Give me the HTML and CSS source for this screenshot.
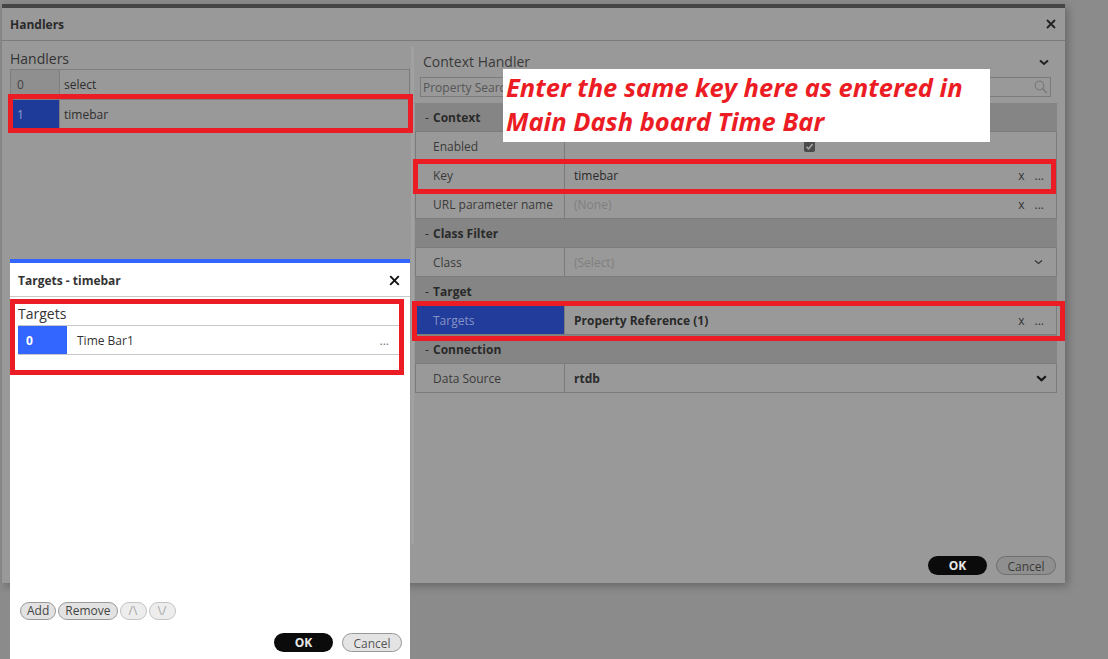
FILE: index.html
```html
<!DOCTYPE html>
<html>
<head>
    <title>Handlers</title>
    <link rel="stylesheet" href="styles.css">
</head>
<body>
    <div class="dialog">
        <div class="dialog-head">
            <span>Handlers</span>
            <svg class="close" width="10" height="10" viewBox="0 0 10 10"><path d="M1 1L9 9M9 1L1 9" stroke="#222" stroke-width="1.8" fill="none"/></svg>
        </div>
        <div class="dialog-body">
            <div class="left-pane">
                <div class="pane-title">Handlers</div>
                <div class="list">
                    <div class="list-row">
                        <div class="idx">0</div>
                        <div class="name">select</div>
                    </div>
                    <div class="list-row selected">
                        <div class="idx">1</div>
                        <div class="name">timebar</div>
                    </div>
                </div>
            </div>
            <div class="splitter"><div class="splitter-bar"></div></div>
            <div class="right-pane">
                <div class="ctx-title">
                    <span>Context Handler</span>
                    <svg width="10" height="7" viewBox="0 0 10 7"><path d="M1 1.5L5 5L9 1.5" stroke="#222" stroke-width="2" fill="none"/></svg>
                </div>
                <div class="search">
                    <span>Property Search</span>
                    <svg width="14" height="14" viewBox="0 0 14 14"><circle cx="5.5" cy="5.5" r="4.3" stroke="#7b7b7b" stroke-width="1.3" fill="none"/><path d="M8.6 8.6L13 13" stroke="#7b7b7b" stroke-width="1.6"/></svg>
                </div>
                <div class="grid">
                    <div class="cat first"><span class="dash">-</span>Context</div>
                    <div class="prop">
                        <div class="prop-label">Enabled</div>
                        <div class="prop-value center">
                            <span class="check"><svg width="11" height="11" viewBox="0 0 11 11"><path d="M2.5 5.8L4.6 7.8L8.6 3" stroke="#a3a3a3" stroke-width="1.6" fill="none"/></svg></span>
                        </div>
                    </div>
                    <div class="prop">
                        <div class="prop-label">Key</div>
                        <div class="prop-value"><span>timebar</span><span class="tools"><span>x</span><span>...</span></span></div>
                    </div>
                    <div class="prop">
                        <div class="prop-label">URL parameter name</div>
                        <div class="prop-value"><span class="muted">(None)</span><span class="tools"><span>x</span><span>...</span></span></div>
                    </div>
                    <div class="cat"><span class="dash">-</span>Class Filter</div>
                    <div class="prop">
                        <div class="prop-label">Class</div>
                        <div class="prop-value"><span class="muted">(Select)</span>
                            <svg class="caret" width="9" height="6" viewBox="0 0 9 6"><path d="M1 1.5L4.5 4.5L8 1.5" stroke="#333" stroke-width="1.2" fill="none"/></svg>
                        </div>
                    </div>
                    <div class="cat"><span class="dash">-</span>Target</div>
                    <div class="prop">
                        <div class="prop-label active">Targets</div>
                        <div class="prop-value"><b>Property Reference (1)</b><span class="tools"><span>x</span><span>...</span></span></div>
                    </div>
                    <div class="cat"><span class="dash">-</span>Connection</div>
                    <div class="prop last">
                        <div class="prop-label">Data Source</div>
                        <div class="prop-value"><b>rtdb</b>
                            <svg class="caret bold" width="11" height="7" viewBox="0 0 11 7"><path d="M1.2 1.2L5.5 5.2L9.8 1.2" stroke="#151515" stroke-width="2.2" fill="none"/></svg>
                        </div>
                    </div>
                </div>
                <div class="actions">
                    <button class="btn-ok">OK</button>
                    <button class="btn-cancel dim">Cancel</button>
                </div>
            </div>
        </div>
    </div>

    <div class="targets">
        <div class="targets-head">
            <span>Targets - timebar</span>
            <svg width="11" height="11" viewBox="0 0 11 11"><path d="M1.2 1.2L9.8 9.8M9.8 1.2L1.2 9.8" stroke="#111" stroke-width="1.9" fill="none"/></svg>
        </div>
        <div class="targets-body">
            <div class="pane-title">Targets</div>
            <div class="target-row">
                <div class="idx">0</div>
                <div class="name">Time Bar1</div>
                <div class="more">...</div>
            </div>
        </div>
        <div class="tool-row">
            <button class="pill">Add</button>
            <button class="pill">Remove</button>
            <button class="pill off">/\</button>
            <button class="pill off">\/</button>
        </div>
        <div class="actions light">
            <button class="btn-ok">OK</button>
            <button class="btn-cancel">Cancel</button>
        </div>
    </div>

    <div class="mark mark-handler"></div>
    <div class="mark mark-key"></div>
    <div class="mark mark-targets"></div>
    <div class="mark mark-list"></div>

    <div class="note">Enter the same key here as entered in<br>Main Dash board Time Bar</div>
</body>
</html>
```

FILE: styles.css
```css
* {
    box-sizing: border-box;
}
body {
    margin: 0;
    padding: 4px 0 0 2px;
    width: 1108px;
    height: 659px;
    overflow: hidden;
    position: relative;
    background: #8b8b8b;
    font-family: "Open Sans", sans-serif;
    font-size: 12px;
    color: #333;
}
button {
    font-family: inherit;
    font-size: 12px;
    cursor: pointer;
}

/* main dialog (dimmed behind the targets window) */
.dialog {
    width: 1063px;
    height: 579px;
    background: #999;
    border-top: 4px solid #454545;
    display: flex;
    flex-direction: column;
    box-shadow: 3px 3px 8px rgba(0, 0, 0, 0.25);
}
.dialog-head {
    height: 33px;
    flex: none;
    border-bottom: 1px solid #7b7b7b;
    display: flex;
    align-items: center;
    justify-content: space-between;
    padding: 0 9px 0 8px;
    font-weight: bold;
    color: #2a2a2a;
}
.dialog-body {
    flex: 1;
    display: flex;
    min-height: 0;
}
.left-pane {
    width: 408px;
    padding: 8px 0 0 8px;
}
.pane-title {
    font-size: 14px;
    line-height: 20px;
    color: #333;
}
.list {
    border: 1px solid #7e7e7e;
}
.list-row {
    display: flex;
    height: 29px;
    align-items: stretch;
}
.list-row + .list-row {
    border-top: 1px solid #7e7e7e;
}
.list-row .idx {
    width: 49px;
    padding-left: 6px;
    display: flex;
    align-items: center;
    background: #8f8f8f;
    border-right: 1px solid #7e7e7e;
    color: #444;
}
.list-row.selected .idx {
    background: #1f3b99;
    color: #8f9bc8;
}
.list-row .name {
    display: flex;
    align-items: center;
    padding-left: 4px;
    color: #2e2e2e;
}
.splitter {
    width: 5px;
    padding-top: 6px;
}
.splitter-bar {
    width: 3px;
    height: 497px;
    margin-left: 1px;
    background: #a1a1a1;
}
.right-pane {
    flex: 1;
    display: flex;
    flex-direction: column;
    padding-right: 8px;
}
.ctx-title {
    display: flex;
    justify-content: space-between;
    align-items: center;
    padding: 12px 8px 0 8px;
    font-size: 14px;
    line-height: 18px;
    color: #3a3a3a;
}
.search {
    margin: 6px 6px 0 5px;
    height: 20px;
    border: 1px solid #7c7c7c;
    display: flex;
    align-items: center;
    justify-content: space-between;
    padding: 0 2px 0 2px;
    color: #555;
}

/* property grid */
.grid {
    margin-top: 6px;
}
.cat {
    height: 29px;
    background: #858585;
    display: flex;
    align-items: center;
    padding-left: 10px;
    font-weight: bold;
    color: #2a2a2a;
}
.cat.first {
    height: 28px;
}
.prop + .cat {
    border-top: 1px solid #7c7c7c;
}
.dash {
    width: 8px;
    font-weight: normal;
}
.prop {
    display: flex;
    height: 29px;
    border: 1px solid #7c7c7c;
    border-bottom: none;
}
.prop.last {
    height: 30px;
    border-bottom: 1px solid #7c7c7c;
}
.prop-label {
    width: 149px;
    padding-left: 17px;
    display: flex;
    align-items: center;
    border-right: 1px solid #7c7c7c;
    color: #3a3a3a;
}
.prop-label.active {
    background: #213c9a;
    color: #8794c6;
}
.prop-value {
    flex: 1;
    display: flex;
    align-items: center;
    justify-content: space-between;
    padding: 0 12px 0 9px;
    color: #2a2a2a;
}
.prop-value.center {
    justify-content: center;
}
.muted {
    color: #7f7f7f;
}
.tools {
    display: flex;
    gap: 10px;
    color: #333;
}
.caret {
    margin-right: 1px;
}
.caret.bold {
    margin-right: -3px;
}
.check {
    width: 11px;
    height: 11px;
    border-radius: 2px;
    background: #4b4b4b;
    display: flex;
}
.actions {
    margin-top: auto;
    display: flex;
    justify-content: flex-end;
    gap: 9px;
    padding: 0 1px 8px 0;
}
.btn-ok {
    width: 59px;
    height: 19px;
    border: none;
    border-radius: 10px;
    background: #0b0b0b;
    color: #e8e8e8;
    font-weight: bold;
}
.btn-cancel {
    width: 60px;
    height: 19px;
    border: 1px solid #999;
    border-radius: 10px;
    background: #e4e4e4;
    color: #555;
}
.btn-cancel.dim {
    background: #8f8f8f;
    border-color: #6e6e6e;
    color: #3a3a3a;
}

/* targets window on top */
.targets {
    position: absolute;
    left: 10px;
    top: 259px;
    width: 400px;
    height: 400px;
    background: #fff;
    border-top: 4px solid #3366ff;
    display: flex;
    flex-direction: column;
}
.targets-head {
    height: 34px;
    border-bottom: 1px solid #c8c8c8;
    display: flex;
    align-items: center;
    justify-content: space-between;
    padding: 1px 10px 0 8px;
    font-weight: bold;
    color: #333;
}
.targets-body {
    padding: 7px 11px 0 8px;
}
.target-row {
    margin-top: 1px;
    height: 30px;
    display: flex;
    border-top: 1px solid #c8c8c8;
    border-bottom: 1px solid #c8c8c8;
}
.target-row .idx {
    width: 49px;
    background: #3366ff;
    color: #fff;
    font-weight: bold;
    display: flex;
    align-items: center;
    padding-left: 8px;
}
.target-row .name {
    flex: 1;
    display: flex;
    align-items: center;
    padding-left: 10px;
    color: #333;
}
.target-row .more {
    display: flex;
    align-items: center;
    padding-right: 10px;
    color: #777;
}
.tool-row {
    margin-top: auto;
    display: flex;
    gap: 2px;
    padding: 0 0 0 10px;
}
.pill {
    height: 18px;
    padding: 0 6px;
    border: 1px solid #9a9a9a;
    border-radius: 9px;
    background: #e2e2e2;
    color: #444;
    line-height: 14px;
}
.pill.off {
    width: 27px;
    padding: 0;
    background: #ededed;
    border-color: #c3c3c3;
    color: #a5a5a5;
}
.actions.light {
    margin-top: 13px;
    padding: 0 8px 7px 0;
}

/* annotations */
.mark {
    position: absolute;
    border: 5px solid #ec1c24;
}
.mark-handler {
    left: 8px;
    top: 94px;
    width: 405px;
    height: 39px;
}
.mark-key {
    left: 413px;
    top: 159px;
    width: 643px;
    height: 35px;
}
.mark-targets {
    left: 412px;
    top: 301px;
    width: 653px;
    height: 40px;
}
.mark-list {
    left: 10px;
    top: 299px;
    width: 394px;
    height: 76px;
}
.note {
    position: absolute;
    left: 503px;
    top: 69px;
    width: 487px;
    height: 73px;
    background: #fff;
    padding: 1px 0 0 3px;
    color: #ec1c24;
    font-family: "Open Sans", sans-serif;
    font-weight: bold;
    font-style: italic;
    font-size: 25.5px;
    line-height: 34px;
}
```
